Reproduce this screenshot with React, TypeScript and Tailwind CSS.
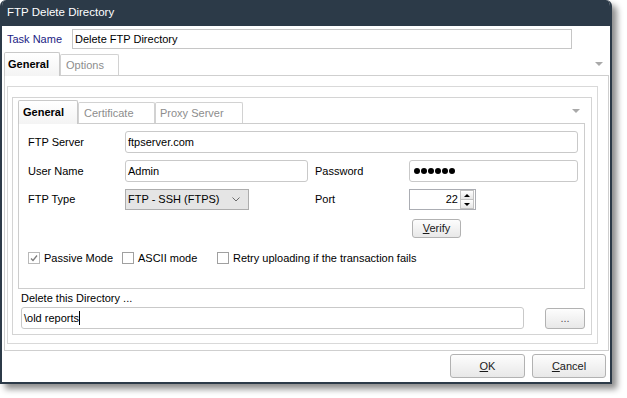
import React from 'react';

const Tab: React.FC<{ label: string; active?: boolean; className?: string }> = ({ label, active, className }) => (
    <div
        className={
            active
                ? `relative z-10 -mb-px h-[24px] flex items-center border border-b-0 border-[#c9c9c9] rounded-t-[2px] bg-gradient-to-b from-white to-[#f4f4f4] font-bold text-black ${className}`
                : `h-[21px] flex items-center border border-b-0 border-[#d2d2d2] rounded-t-[2px] bg-white text-[#8d8d8d] ${className}`
        }
    >
        {label}
    </div>
);

const Arrow: React.FC<{ className: string }> = ({ className }) => (
    <div className={`absolute w-0 h-0 border-l-[4px] border-r-[4px] border-t-[4px] border-l-transparent border-r-transparent border-t-[#a9a9a9] ${className}`} />
);

const Check: React.FC<{ checked?: boolean; label: string; className?: string }> = ({ checked, label, className }) => (
    <div className={`flex items-center ${className}`}>
        <div className={`w-[12px] h-[12px] border ${checked ? 'border-[#b9b9b9]' : 'border-[#a0a0a0]'} bg-white flex items-center justify-center`}>
            {checked && (
                <svg width="8" height="8" viewBox="0 0 8 8">
                    <polyline points="1,4.5 3,6.5 7,1.5" fill="none" stroke="#7d7d7d" strokeWidth="1.3" />
                </svg>
            )}
        </div>
        <span className="ml-[4px]">{label}</span>
    </div>
);

const Btn: React.FC<{ children: React.ReactNode; className?: string }> = ({ children, className }) => (
    <div className={`flex items-center justify-center rounded-[3px] border border-[#b2b2b2] bg-gradient-to-b from-[#fdfdfd] to-[#e8e8e8] text-[#1a1a1a] ${className}`}>
        {children}
    </div>
);

const inputCls = 'h-[22px] rounded-[3px] border border-[#c9c9c9] bg-white flex items-center pl-[2px]';

export default function App() {
    return (
        <div className="w-[627px] h-[398px] bg-white font-['Liberation_Sans',Arial,sans-serif] text-[11px] text-black">
            <div className="w-[612px] h-[384px] flex flex-col rounded-t-[6px] overflow-hidden border-x-2 border-b-2 border-[#2c3a48] bg-white shadow-[5px_5px_6px_rgba(0,0,0,0.45)]">
                {/* title bar */}
                <div className="h-[26px] shrink-0 bg-[#2c3a48] text-white text-[11.5px] flex items-center pl-[5px]">
                    FTP Delete Directory
                </div>

                {/* task name */}
                <div className="mt-[3px] h-[20px] flex items-center">
                    <div className="w-[70px] pl-[5px] text-[#1c1c84]">Task Name</div>
                    <div className="w-[500px] h-[20px] border border-[#c6c6c6] flex items-center pl-[2px]">Delete FTP Directory</div>
                </div>

                {/* outer tabs */}
                <div className="relative mt-[4px] h-[22px] flex items-end pl-[2px]">
                    <Tab label="General" active className="w-[56px] pl-[3px]" />
                    <Tab label="Options" className="w-[59px] pl-[5px]" />
                    <Arrow className="right-[7px] top-[9px]" />
                </div>

                <div className="ml-[2px] w-[605px] h-[276px] border border-[#cfcfcf]">
                    <div className="ml-[2px] mt-[10px] w-[591px] h-[258px] border border-[#d9d9d9]">
                        <div className="ml-[4px] mt-[10px] w-[580px] h-[238px] border border-[#d4d4d4]">
                            {/* inner tabs */}
                            <div className="relative mt-[1px] h-[24px] flex items-end pl-[5px]">
                                <Tab label="General" active className="w-[60px] pl-[4px]" />
                                <Tab label="Certificate" className="w-[77px] pl-[5px]" />
                                <Tab label="Proxy Server" className="w-[88px] pl-[4px]" />
                                <Arrow className="right-[11px] top-[10px]" />
                            </div>

                            <div className="ml-[5px] w-[567px] h-[166px] border border-[#cdcdcd] pl-[9px]">
                                <div className="mt-[7px] h-[22px] flex items-center">
                                    <div className="w-[97px]">FTP Server</div>
                                    <div className={`${inputCls} w-[453px]`}>ftpserver.com</div>
                                </div>

                                <div className="mt-[7px] h-[22px] flex items-center">
                                    <div className="w-[97px]">User Name</div>
                                    <div className={`${inputCls} w-[183px]`}>Admin</div>
                                    <div className="ml-[7px] w-[94px]">Password</div>
                                    <div className={`${inputCls} w-[169px] pl-[4px] gap-px`}>
                                        {[0, 1, 2, 3, 4, 5].map(i => (
                                            <span key={i} className="w-[6px] h-[6px] rounded-full bg-black" />
                                        ))}
                                    </div>
                                </div>

                                <div className="mt-[7px] h-[21px] flex items-center">
                                    <div className="w-[97px]">FTP Type</div>
                                    <div className="w-[124px] h-[21px] border border-[#adadad] bg-[#e5e5e5] flex items-center justify-between pl-[2px] pr-[8px]">
                                        <span>FTP - SSH (FTPS)</span>
                                        <svg width="8" height="5" viewBox="0 0 8 5">
                                            <polyline points="0.5,0.5 4,4 7.5,0.5" fill="none" stroke="#6a6a6a" strokeWidth="1" />
                                        </svg>
                                    </div>
                                    <div className="ml-[66px] w-[94px]">Port</div>
                                    <div className="w-[67px] h-[21px] border border-[#abadb3] bg-white flex items-center justify-end">
                                        <span className="mr-[2px]">22</span>
                                        <div className="flex flex-col w-[14px] h-[19px] mr-px">
                                            <div className="flex-1 border border-[#c2c2c2] bg-gradient-to-b from-white to-[#e6e6e6] flex items-center justify-center">
                                                <div className="w-0 h-0 border-l-[3px] border-r-[3px] border-b-[3px] border-l-transparent border-r-transparent border-b-black" />
                                            </div>
                                            <div className="flex-1 border border-t-0 border-[#c2c2c2] bg-gradient-to-b from-white to-[#e6e6e6] flex items-center justify-center">
                                                <div className="w-0 h-0 border-l-[3px] border-r-[3px] border-t-[3px] border-l-transparent border-r-transparent border-t-black" />
                                            </div>
                                        </div>
                                    </div>
                                </div>

                                <Btn className="mt-[9px] ml-[384px] w-[49px] h-[19px]">
                                    <span><span className="underline">V</span>erify</span>
                                </Btn>

                                <div className="mt-[14px] h-[12px] flex items-center">
                                    <Check checked label="Passive Mode" className="w-[94px]" />
                                    <Check label="ASCII mode" className="w-[95px]" />
                                    <Check label="Retry uploading if the transaction fails" />
                                </div>
                            </div>

                            <div className="pl-[8px]">
                                <div className="h-[18px] flex items-center">Delete this Directory ...</div>
                                <div className="h-[22px] flex items-center">
                                    <div className={`${inputCls} w-[503px]`}>
                                        <span>\old reports</span>
                                        <span className="w-px h-[14px] bg-black" />
                                    </div>
                                    <Btn className="ml-[21px] w-[40px] h-[21px] text-[#555]">...</Btn>
                                </div>
                            </div>
                        </div>
                    </div>
                </div>

                {/* footer */}
                <div className="mt-[3px] flex justify-end gap-[7px] pr-[4px]">
                    <Btn className="w-[75px] h-[24px]"><span><span className="underline">O</span>K</span></Btn>
                    <Btn className="w-[74px] h-[24px]"><span><span className="underline">C</span>ancel</span></Btn>
                </div>
            </div>
        </div>
    );
}
